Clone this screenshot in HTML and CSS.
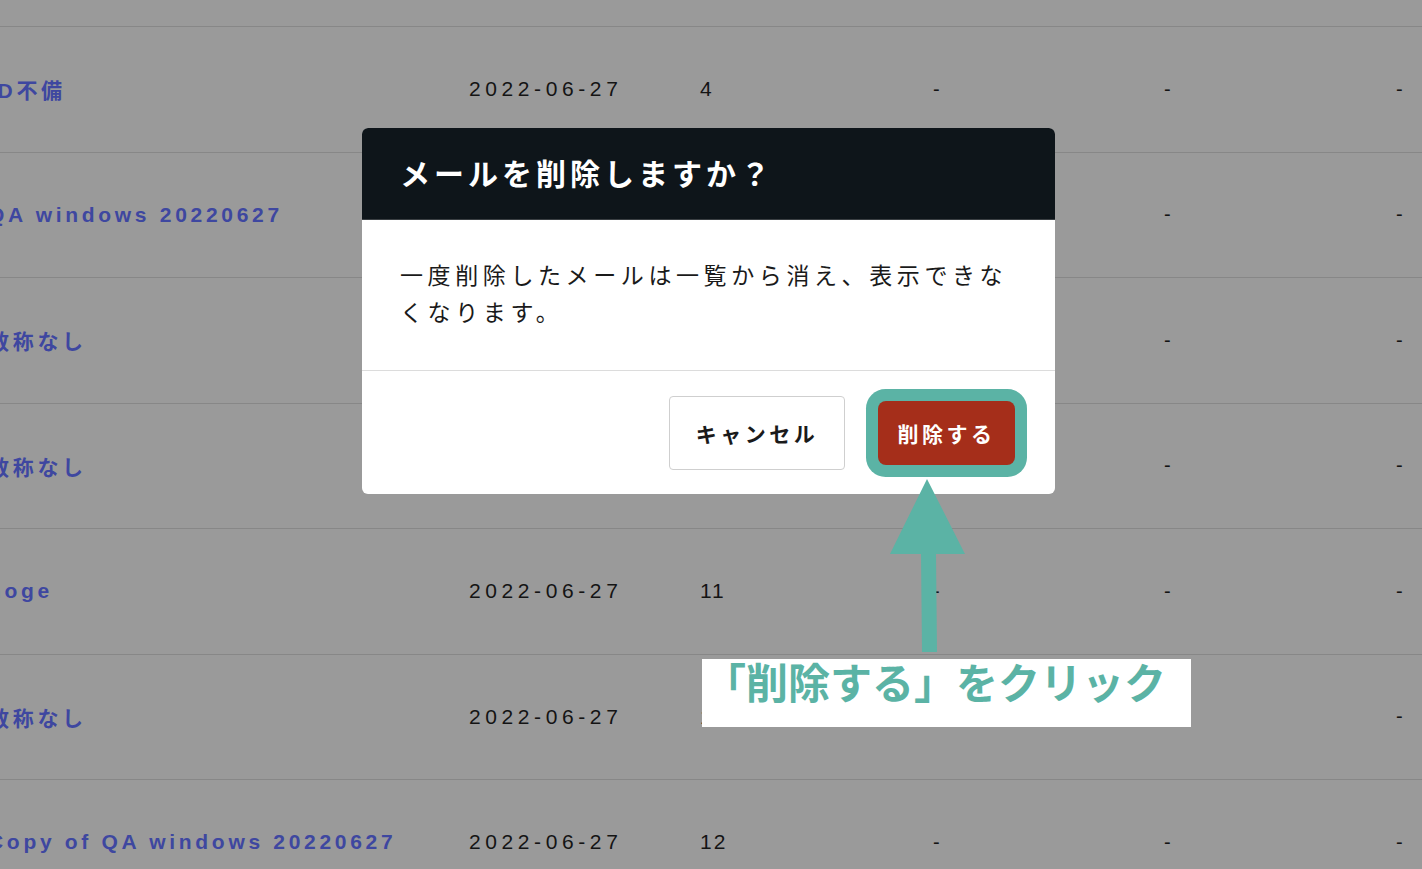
FILE: index.html
```html
<!doctype html>
<html lang="ja">
  <head>
    <meta charset="utf-8">
    <title>メール一覧</title>
    <meta name="viewport" content="width=device-width, initial-scale=1">
    <link rel="stylesheet" href="styles.css">
  </head>
  <body>
    <div class="mail-list">
      <div class="mail-row">
        <a class="mail-name" href="#">テスト配信</a>
        <span class="mail-date">2022-06-27</span>
        <span class="mail-count">3</span>
        <span class="mail-dash">-</span>
        <span class="mail-dash">-</span>
        <span class="mail-dash">-</span>
      </div>
      <div class="mail-row">
        <a class="mail-name" href="#">ID不備</a>
        <span class="mail-date">2022-06-27</span>
        <span class="mail-count">4</span>
        <span class="mail-dash">-</span>
        <span class="mail-dash">-</span>
        <span class="mail-dash">-</span>
      </div>
      <div class="mail-row">
        <a class="mail-name" href="#">QA windows 20220627</a>
        <span class="mail-date">2022-06-27</span>
        <span class="mail-count">5</span>
        <span class="mail-dash">-</span>
        <span class="mail-dash">-</span>
        <span class="mail-dash">-</span>
      </div>
      <div class="mail-row">
        <a class="mail-name" href="#">敬称なし</a>
        <span class="mail-date">2022-06-27</span>
        <span class="mail-count">7</span>
        <span class="mail-dash">-</span>
        <span class="mail-dash">-</span>
        <span class="mail-dash">-</span>
      </div>
      <div class="mail-row">
        <a class="mail-name" href="#">敬称なし</a>
        <span class="mail-date">2022-06-27</span>
        <span class="mail-count">9</span>
        <span class="mail-dash">-</span>
        <span class="mail-dash">-</span>
        <span class="mail-dash">-</span>
      </div>
      <div class="mail-row">
        <a class="mail-name" href="#">hoge</a>
        <span class="mail-date">2022-06-27</span>
        <span class="mail-count">11</span>
        <span class="mail-dash">-</span>
        <span class="mail-dash">-</span>
        <span class="mail-dash">-</span>
      </div>
      <div class="mail-row">
        <a class="mail-name" href="#">敬称なし</a>
        <span class="mail-date">2022-06-27</span>
        <span class="mail-count">10</span>
        <span class="mail-dash">-</span>
        <span class="mail-dash">-</span>
        <span class="mail-dash">-</span>
      </div>
      <div class="mail-row">
        <a class="mail-name" href="#">Copy of QA windows 20220627</a>
        <span class="mail-date">2022-06-27</span>
        <span class="mail-count">12</span>
        <span class="mail-dash">-</span>
        <span class="mail-dash">-</span>
        <span class="mail-dash">-</span>
      </div>
    </div>

    <div class="modal">
      <div class="modal-header">
        <h2 class="modal-title">メールを削除しますか？</h2>
      </div>
      <div class="modal-body">
        <p>一度削除したメールは一覧から消え、表示できなくなります。</p>
      </div>
      <div class="modal-footer">
        <button class="btn btn-cancel" type="button">キャンセル</button>
        <button class="btn btn-delete" type="button">削除する</button>
      </div>
    </div>

    <!-- annotation: arrow pointing at the delete button -->
    <svg class="hint-arrow" viewBox="880 470 100 190" width="100" height="190">
      <polygon points="927,479 965,554 936,554 937,652 922,652 921,554 890,554" fill="#5bb3a5"/>
    </svg>
    <div class="hint-label">「削除する」をクリック</div>
  </body>
</html>
```

FILE: styles.css
```css
html, body {
    margin: 0;
    height: 100%;
    overflow: hidden;
}
body {
    position: relative;
    background: #9a9a9a;
    font-family: "Liberation Sans", "Noto Sans CJK JP", sans-serif;
    color: #141414;
}

/* list behind the backdrop, scrolled a bit to the right and down */
.mail-list {
    margin-top: -98.5px;
    margin-left: -12px;
}
.mail-row {
    display: grid;
    grid-template-columns: 481px 231px 233px 231px 232px 1fr;
    align-items: center;
    height: 125.5px;
    box-sizing: border-box;
    border-bottom: 1px solid #878787;
    font-size: 21px;
}
.mail-name {
    color: #3e47a0;
    font-weight: bold;
    letter-spacing: 3.7px;
    text-decoration: none;
    white-space: nowrap;
}
.mail-date {
    letter-spacing: 4.6px;
}
.mail-count {
    letter-spacing: 2px;
}
.mail-dash {
    font-size: 20px;
}

/* modal */
.modal {
    position: absolute;
    top: 128px;
    left: 362px;
    width: 693px;
    background: #fff;
    border-radius: 6px;
    overflow: hidden;
}
.modal-header {
    display: flex;
    align-items: center;
    height: 91px;
    padding: 0 38px;
    background: #0e151a;
    border-bottom: 1px solid #3a3f43;
}
.modal-title {
    margin: 0 0 4px;
    color: #fff;
    font-family: "Noto Sans CJK JP", sans-serif;
    font-size: 30px;
    font-weight: bold;
    letter-spacing: 4px;
}
.modal-body {
    padding: 36px 38px 40px;
    border-bottom: 1px solid #dcdcdc;
}
.modal-body p {
    margin: 0;
    font-family: "Noto Sans CJK JP", sans-serif;
    font-size: 23px;
    line-height: 37px;
    letter-spacing: 4.6px;
    color: #1a1a1a;
}
.modal-footer {
    display: flex;
    justify-content: flex-end;
    align-items: center;
    gap: 33px;
    height: 123px;
    padding: 0 40px;
}
.btn {
    font-family: "Noto Sans CJK JP", sans-serif;
    font-size: 21px;
    font-weight: bold;
    letter-spacing: 3.5px;
    cursor: pointer;
}
.btn-cancel {
    width: 176px;
    height: 74px;
    background: #fff;
    color: #1a1a1a;
    border: 1px solid #cfcfcf;
    border-radius: 4px;
}
.btn-delete {
    width: 137px;
    height: 64px;
    background: #a52e1a;
    color: #fff;
    border: none;
    border-radius: 8px;
    /* annotation ring */
    box-shadow: 0 0 0 12px #5bb3a5;
}

/* annotation */
.hint-arrow {
    position: absolute;
    left: 880px;
    top: 470px;
}
.hint-label {
    position: absolute;
    left: 702px;
    top: 659px;
    width: 489px;
    height: 68px;
    box-sizing: border-box;
    padding: 1px 0 0 2px;
    background: #fff;
    color: #5bb3a5;
    font-family: "Noto Sans CJK JP", sans-serif;
    font-size: 42px;
    font-weight: bold;
    line-height: 1;
    white-space: nowrap;
}
```
